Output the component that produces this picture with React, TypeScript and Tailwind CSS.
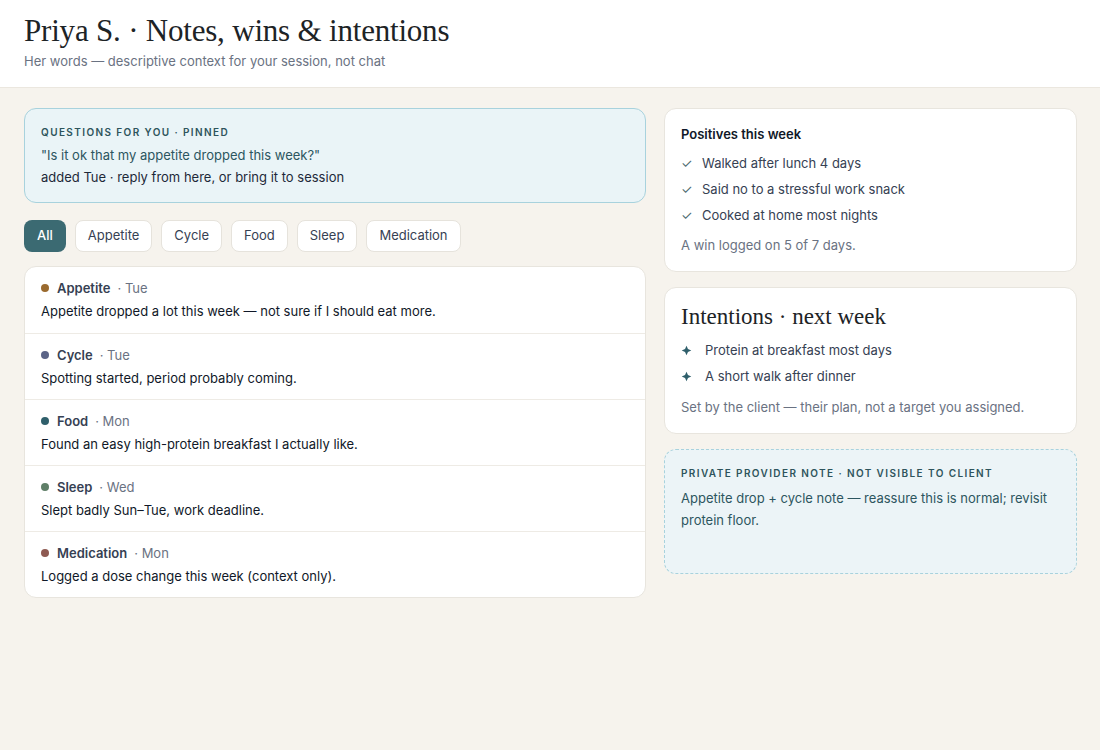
const notes = [
  { cat: 'Appetite', day: 'Tue', dot: 'bg-[#9a6a2e]', text: 'Appetite dropped a lot this week — not sure if I should eat more.' },
  { cat: 'Cycle', day: 'Tue', dot: 'bg-[#5b6487]', text: 'Spotting started, period probably coming.' },
  { cat: 'Food', day: 'Mon', dot: 'bg-[#2f5f6b]', text: 'Found an easy high-protein breakfast I actually like.' },
  { cat: 'Sleep', day: 'Wed', dot: 'bg-[#5f7f68]', text: 'Slept badly Sun–Tue, work deadline.' },
  { cat: 'Medication', day: 'Mon', dot: 'bg-[#8e5a52]', text: 'Logged a dose change this week (context only).' },
]

const filters = ['All', 'Appetite', 'Cycle', 'Food', 'Sleep', 'Medication']

const wins = ['Walked after lunch 4 days', 'Said no to a stressful work snack', 'Cooked at home most nights']

const intentions = ['Protein at breakfast most days', 'A short walk after dinner']

const serif = "font-['Liberation_Serif','DejaVu_Serif',serif]"

function Sparkle() {
  return (
    <svg viewBox="0 0 12 12" className="h-[11px] w-[11px] shrink-0 text-[#2f5f6b]" fill="currentColor">
      <path d="M6 0.8 L7.6 4.4 L11.2 6 L7.6 7.6 L6 11.2 L4.4 7.6 L0.8 6 L4.4 4.4 Z" />
    </svg>
  )
}

export default function App() {
  return (
    <div className="min-h-[750px] bg-[#f6f3ed] font-['Inter','Liberation_Sans',sans-serif] text-gray-900">
      <header className="border-b border-[#ebe7df] bg-white px-6 pb-[16px] pt-[13px]">
        <h1 className={`${serif} text-[31px] leading-[36px] tracking-[-0.2px] text-[#1d2326]`}>
          Priya S. · Notes, wins &amp; intentions
        </h1>
        <p className="mt-[2px] text-[13px] leading-5 text-gray-500">
          Her words — descriptive context for your session, not chat
        </p>
      </header>

      <main className="grid grid-cols-[1fr_413px] items-start gap-[18px] py-5 pl-6 pr-[23px]">
        <section className="flex flex-col">
          <div className="rounded-xl border border-[#a8d2dd] bg-[#eaf4f7] px-4 pb-[14px] pt-[15px]">
            <p className="text-[10px] font-semibold uppercase leading-4 tracking-[0.14em] text-[#2e545c]">
              Questions for you · Pinned
            </p>
            <p className="mt-[4px] text-[13px] leading-[22px] text-[#2c5660]">
              "Is it ok that my appetite dropped this week?"
            </p>
            <p className="text-[13px] leading-[22px] text-gray-800">
              added Tue · reply from here, or bring it to session
            </p>
          </div>

          <div className="mt-[17px] flex gap-[9px]">
            {filters.map((f, i) => (
              <button
                key={f}
                className={
                  i === 0
                    ? 'h-8 rounded-lg bg-[#3b6a72] px-[13px] text-[13px] font-medium text-white'
                    : 'h-8 rounded-lg border border-[#e6e3dc] bg-white px-3 text-[13px] text-gray-700'
                }
              >
                {f}
              </button>
            ))}
          </div>

          <div className="mt-[14px] overflow-hidden rounded-xl border border-[#e8e5de] bg-white">
            {notes.map((n, i) => (
              <div key={n.cat} className={`h-[66px] px-4 pt-[11px] ${i > 0 ? 'border-t border-[#eeebe5]' : ''}`}>
                <div className="flex items-center text-[13px] leading-5">
                  <span className={`mr-2 h-2 w-2 rounded-full ${n.dot}`} />
                  <span className="font-semibold text-gray-700">{n.cat}</span>
                  <span className="ml-[7px] text-gray-500">· {n.day}</span>
                </div>
                <p className="mt-[3px] text-[13px] leading-5 text-gray-900">{n.text}</p>
              </div>
            ))}
          </div>
        </section>

        <aside className="flex flex-col gap-[15px]">
          <div className="rounded-xl border border-[#e8e5de] bg-white px-4 pb-4 pt-[15px]">
            <h2 className="text-[13px] font-semibold leading-5 text-gray-900">Positives this week</h2>
            <ul className="mt-[9px] flex flex-col gap-[6px]">
              {wins.map((w) => (
                <li key={w} className="flex items-center text-[13px] leading-5 text-gray-700">
                  <span className="w-[21px] text-[13px] text-[#4d6b70]">✓</span>
                  {w}
                </li>
              ))}
            </ul>
            <p className="mt-[10px] text-[13px] leading-5 text-gray-500">A win logged on 5 of 7 days.</p>
          </div>

          <div className="rounded-xl border border-[#e8e5de] bg-white px-4 pb-4 pt-[14px]">
            <h2 className={`${serif} text-[23px] leading-[30px] text-[#1d2326]`}>Intentions · next week</h2>
            <ul className="mt-[8px] flex flex-col gap-[6px]">
              {intentions.map((t) => (
                <li key={t} className="flex items-center gap-[13px] text-[13px] leading-5 text-gray-700">
                  <Sparkle />
                  {t}
                </li>
              ))}
            </ul>
            <p className="mt-[11px] text-[13px] leading-5 text-gray-500">
              Set by the client — their plan, not a target you assigned.
            </p>
          </div>

          <div className="min-h-[125px] rounded-xl border border-dashed border-[#a8d2dd] bg-[#ecf4f7] px-4 pt-[15px]">
            <p className="text-[10px] font-semibold uppercase leading-4 tracking-[0.14em] text-[#2e545c]">
              Private provider note · not visible to client
            </p>
            <p className="mt-[6px] text-[13px] leading-[22px] text-[#2c5660]">
              Appetite drop + cycle note — reassure this is normal; revisit protein floor.
            </p>
          </div>
        </aside>
      </main>
    </div>
  )
}
